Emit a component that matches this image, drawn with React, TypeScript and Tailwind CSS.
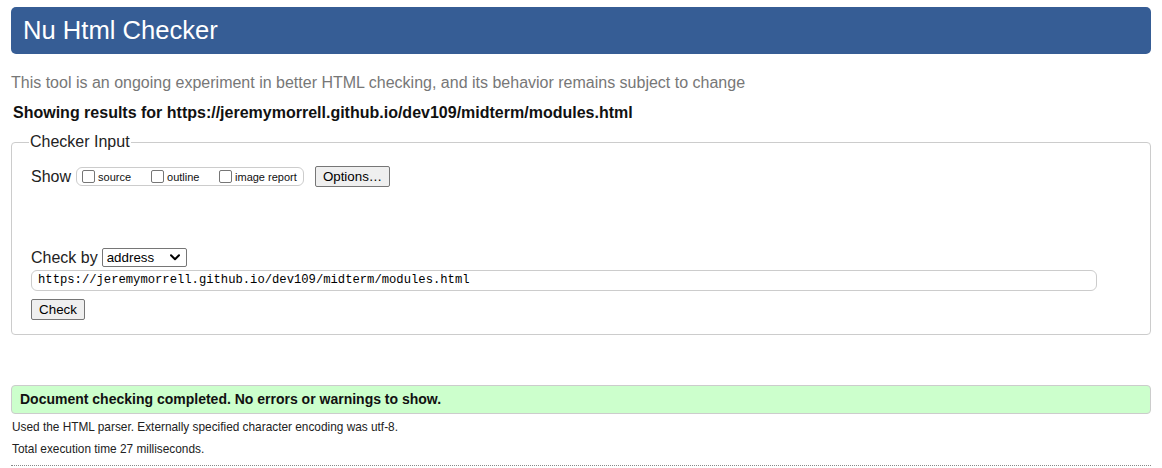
import React from 'react';

const sans = { fontFamily: '"Liberation Sans", Arial, sans-serif' };

function ShowOption({ label }: { label: string }) {
  return (
    <label className="flex items-center">
      <span className="inline-block h-[13px] w-[13px] rounded-[2px] border border-[#767676] bg-white" />
      <span className="ml-[3px] mt-[2px] text-[11px] text-[#111]">{label}</span>
    </label>
  );
}

export default function App() {
  return (
    <div className="min-h-[468px] bg-white px-[11px] pt-[7px] text-black" style={sans}>
      <h1 className="flex h-[47px] items-center rounded-[5px] bg-[#365d95] px-[12px] text-[25.6px] font-normal text-white">
        Nu Html Checker
      </h1>

      <p className="mt-[19px] text-[16px] leading-[20px] text-[#777]">
        This tool is an ongoing experiment in better HTML checking, and its behavior remains subject to change
      </p>
      <p className="ml-[2px] mt-[10px] text-[16px] font-bold leading-[20px] text-[#111]">
        Showing results for https://jeremymorrell.github.io/dev109/midterm/modules.html
      </p>

      <fieldset className="mt-[10px] rounded-[4px] border border-[#ccc] px-[19px] pb-[14px]">
        <legend className="-ml-[2px] px-[1px] text-[16px] leading-[18px] text-[#222]">Checker Input</legend>

        <div className="mt-[15px] flex h-[21px] items-center">
          <span className="text-[16px] text-[#222]">Show</span>
          <div className="ml-[5px] flex h-[19px] w-[228px] items-center rounded-[6px] border border-[#ccc] pl-[5px]">
            <div className="w-[69px]">
              <ShowOption label="source" />
            </div>
            <div className="w-[68px]">
              <ShowOption label="outline" />
            </div>
            <ShowOption label="image report" />
          </div>
          <button className="ml-[11px] h-[21px] w-[75px] rounded-[2px] border border-[#767676] bg-[#efefef] text-[13.33px] text-black">
            Options…
          </button>
        </div>

        <div className="mt-[61px] flex h-[19px] items-center">
          <span className="text-[16px] text-[#222]">Check by</span>
          <div className="ml-[4px] flex h-[19px] w-[85px] items-center justify-between rounded-[2px] border border-[#767676] bg-white pl-[4px] pr-[6px]">
            <span className="text-[13.33px] text-black">address</span>
            <svg width="10" height="7" viewBox="0 0 10 7" fill="none">
              <path d="M1 1.2 L5 5.2 L9 1.2" stroke="#000" strokeWidth="2" strokeLinecap="round" strokeLinejoin="round" />
            </svg>
          </div>
        </div>

        <div
          className="mt-[3px] flex h-[21px] w-[1066px] items-center rounded-[6px] border border-[#ccc] pl-[6px] text-[12.2px] text-black"
          style={{ fontFamily: '"Liberation Mono", "DejaVu Sans Mono", monospace' }}
        >
          https://jeremymorrell.github.io/dev109/midterm/modules.html
        </div>

        <button className="mt-[8px] block h-[21px] w-[54px] rounded-[2px] border border-[#767676] bg-[#efefef] text-[13.33px] text-black">
          Check
        </button>
      </fieldset>

      <div className="mt-[50px] flex h-[29px] items-center rounded-[4px] border border-[#ccc] bg-[#ccffcc] pl-[8px] text-[14px] font-bold text-[#111]">
        Document checking completed. No errors or warnings to show.
      </div>

      <p className="ml-[1px] mt-[5px] text-[11.85px] leading-[16px] text-[#222]">
        Used the HTML parser. Externally specified character encoding was utf-8.
      </p>
      <p className="ml-[1px] mt-[6px] text-[11.85px] leading-[16px] text-[#222]">Total execution time 27 milliseconds.</p>
      <hr className="mt-[8px] border-0 border-t border-dotted border-[#888]" />
    </div>
  );
}
